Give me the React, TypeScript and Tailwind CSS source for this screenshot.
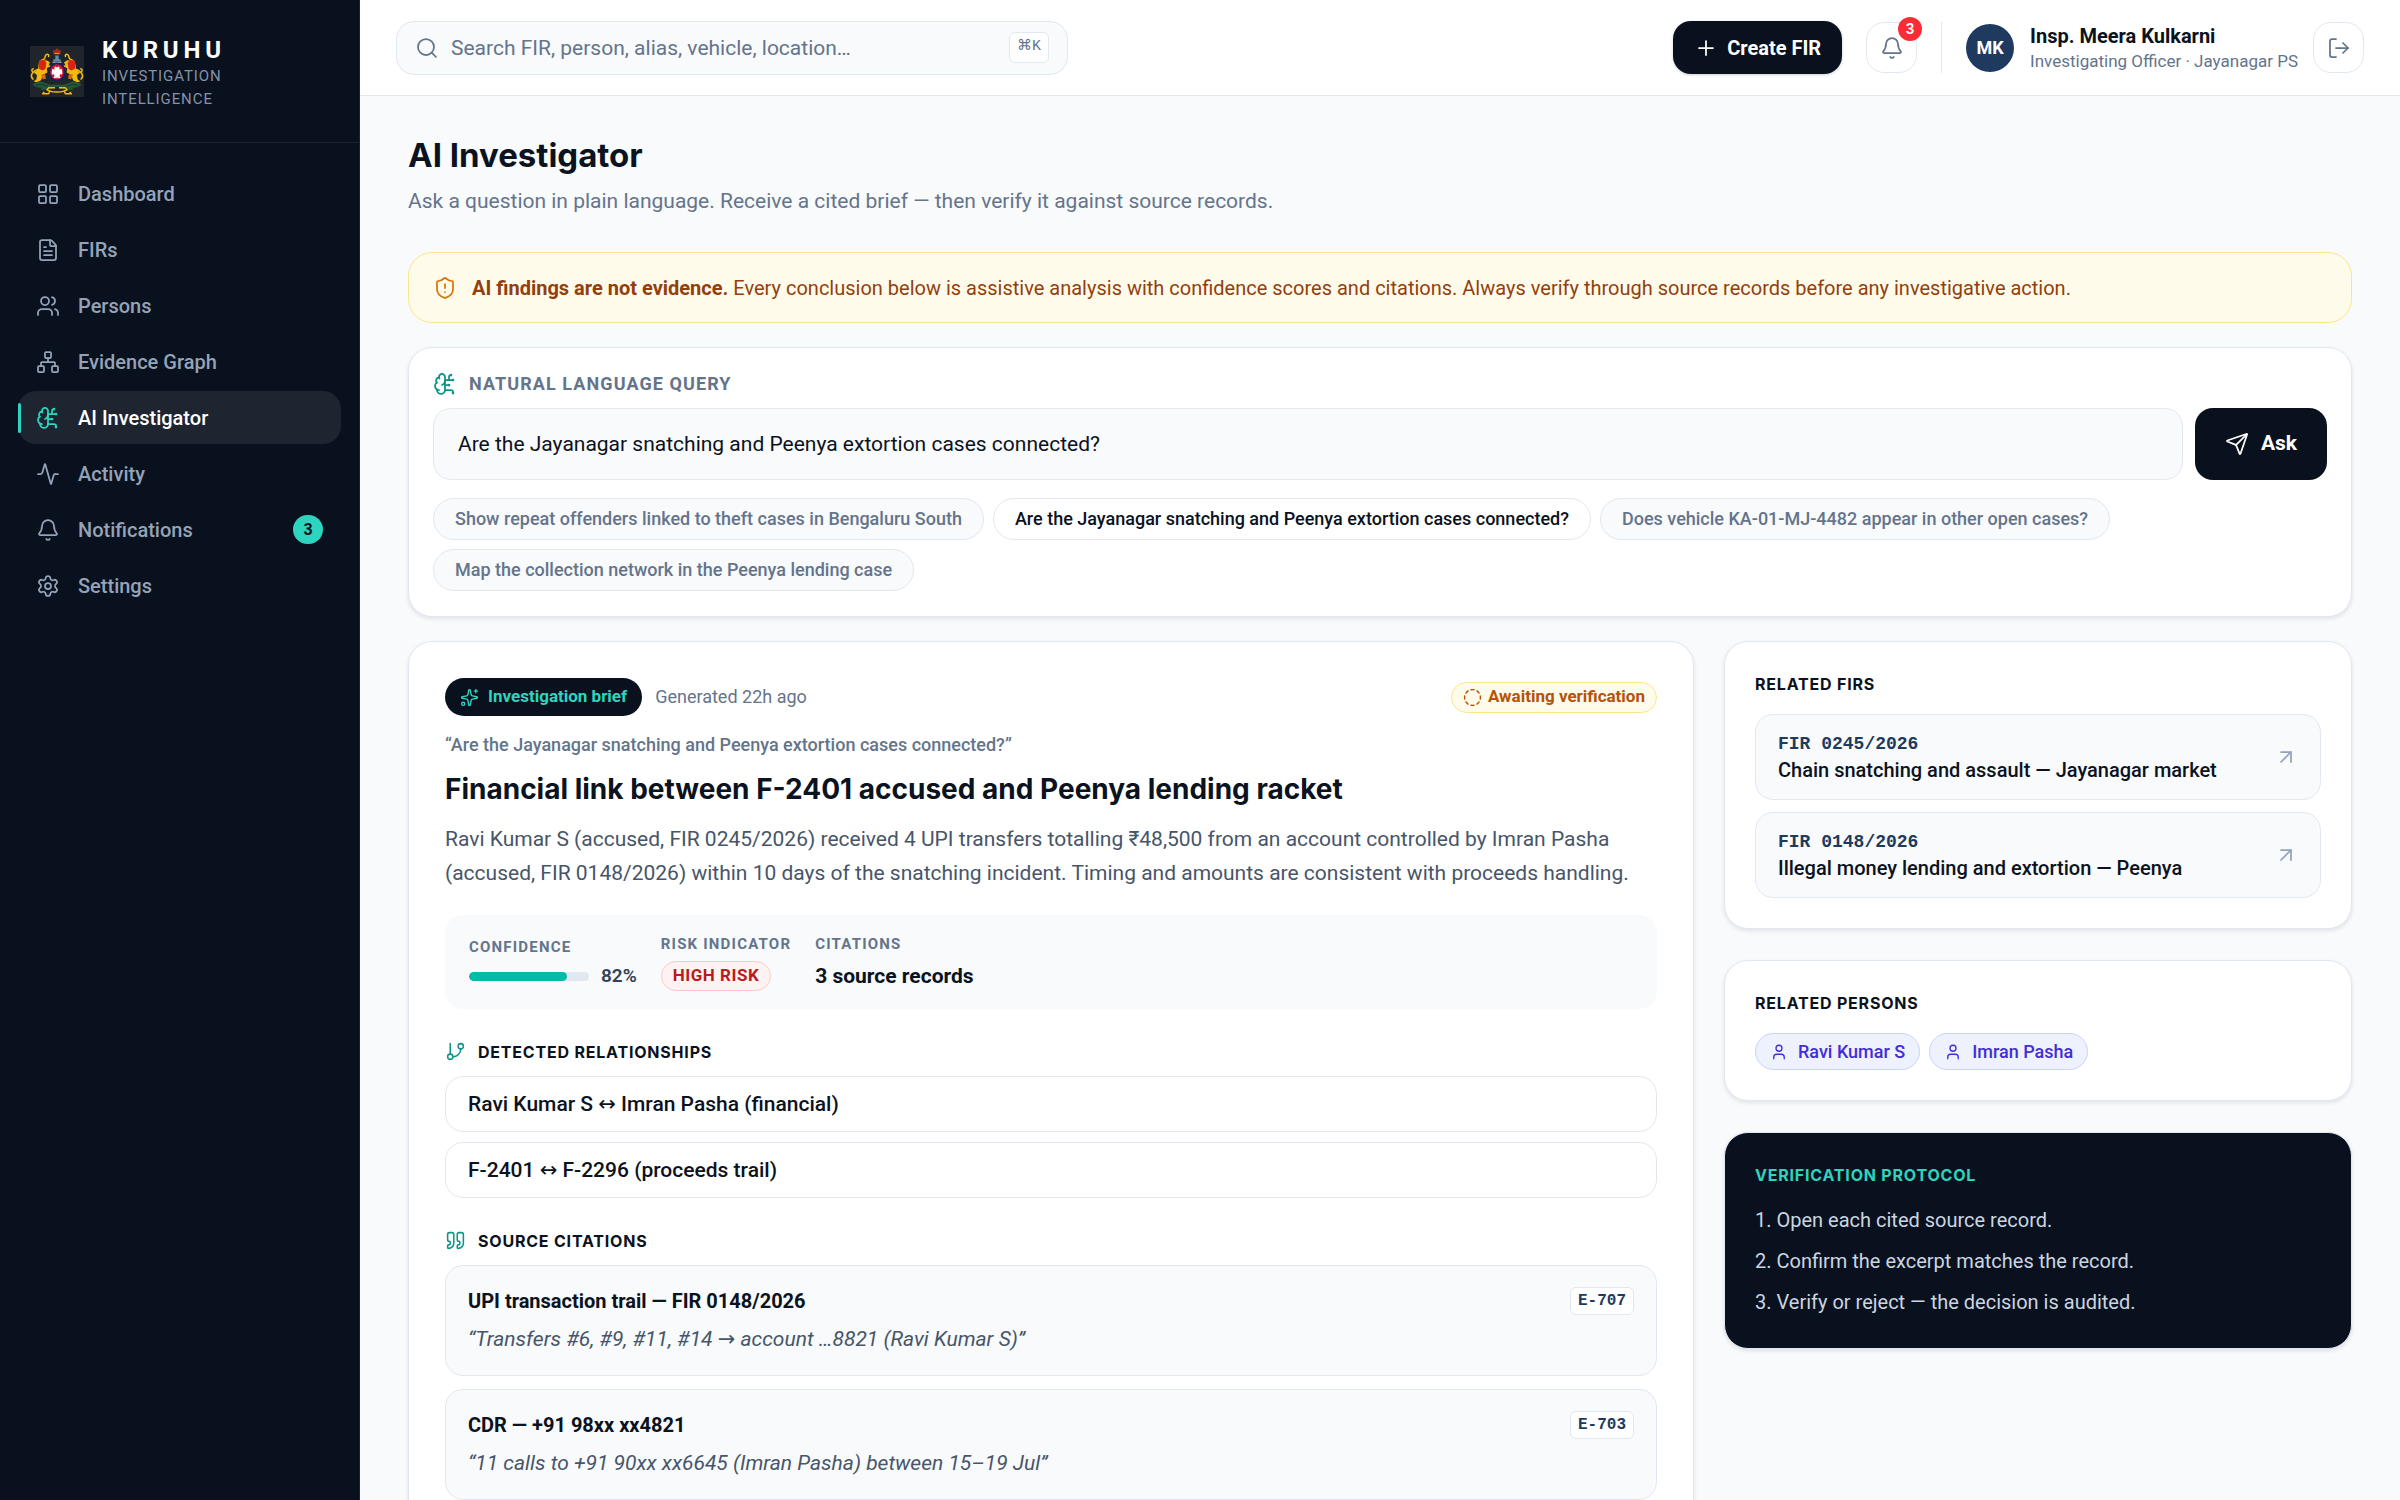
import React from 'react';
import {
  Activity,
  ArrowUpRight,
  Bell,
  BrainCircuit,
  CircleDashed,
  FileText,
  GitBranch,
  LayoutGrid,
  LogOut,
  Network,
  Plus,
  Quote,
  Search,
  Send,
  Settings,
  ShieldAlert,
  Sparkles,
  User,
  Users,
  type LucideIcon,
} from 'lucide-react';

type NavItem = { label: string; icon: LucideIcon; active?: boolean; count?: number };

const NAV: NavItem[] = [
  { label: 'Dashboard', icon: LayoutGrid },
  { label: 'FIRs', icon: FileText },
  { label: 'Persons', icon: Users },
  { label: 'Evidence Graph', icon: Network },
  { label: 'AI Investigator', icon: BrainCircuit, active: true },
  { label: 'Activity', icon: Activity },
  { label: 'Notifications', icon: Bell, count: 3 },
  { label: 'Settings', icon: Settings },
];

const QUESTION = 'Are the Jayanagar snatching and Peenya extortion cases connected?';

const SUGGESTIONS = [
  'Show repeat offenders linked to theft cases in Bengaluru South',
  QUESTION,
  'Does vehicle KA-01-MJ-4482 appear in other open cases?',
  'Map the collection network in the Peenya lending case',
];

const RELATIONSHIPS = ['Ravi Kumar S ↔ Imran Pasha (financial)', 'F-2401 ↔ F-2296 (proceeds trail)'];

const CITATIONS = [
  {
    title: 'UPI transaction trail — FIR 0148/2026',
    excerpt: '“Transfers #6, #9, #11, #14 → account …8821 (Ravi Kumar S)”',
    id: 'E-707',
  },
  {
    title: 'CDR — +91 98xx xx4821',
    excerpt: '“11 calls to +91 90xx xx6645 (Imran Pasha) between 15–19 Jul”',
    id: 'E-703',
  },
];

const FIRS = [
  { id: 'FIR 0245/2026', title: 'Chain snatching and assault — Jayanagar market' },
  { id: 'FIR 0148/2026', title: 'Illegal money lending and extortion — Peenya' },
];

const PERSONS = ['Ravi Kumar S', 'Imran Pasha'];

const PROTOCOL = [
  '1. Open each cited source record.',
  '2. Confirm the excerpt matches the record.',
  '3. Verify or reject — the decision is audited.',
];

const MONO = "font-['Liberation_Mono',monospace]";
const DISPLAY = "font-['Inter',sans-serif]";
const PANEL = 'rounded-3xl border border-[#e2e8f0] shadow-[0_2px_4px_rgba(15,23,42,0.1)]';
const HEADING = "font-['Inter',sans-serif] text-base leading-6 font-bold tracking-[0.05em] uppercase";

function EmblemSide() {
  return (
    <g>
      <path
        d="M18.5 10.5c.8-1.6-1-3-2.4-1.8-1.4 1.2-.6 3.3-2.2 4.6-2.6.6-4 2-4.4 4.6l-.6 5c-2.6.6-5 2-6.6 4.4-1.2 1.8-.9 4.2.6 5.8M3.2 22.8c-1.8.3-1.8 3.2.4 3.4"
        fill="none"
        stroke="#f2b90f"
        strokeWidth="1.5"
        strokeLinecap="round"
      />
      <path d="M9 15.5l5-1.7 4.5 1.2.5 4-2.2 3.4.6 4.2-4.6 2.2-1.8 5.4-3.8 2-3.6-.6 2.8-2.4.6-4.2-3-2.2 4.6-4z" fill="#f2b90f" />
      <path d="M9.2 14.6l5.4-.8 2 2.2-1.2 7-3 1.6-3.6-2z" fill="#d92316" />
      <path d="M11 28.8l4-.8 1 4.6-3.2.8z" fill="#d9690f" />
      <path d="M16 15.6l3.4 1.2M17 21l3-1" stroke="#f2b90f" strokeWidth="1.4" strokeLinecap="round" />
      <path d="M2.5 38.5c4-3.6 8-3.6 11.5-2 3.4 1.4 6 2.4 10 2.3v3.4c-5 .4-9 2.4-14 1.4 1-1 2-1.4 2.8-2.2-3.6.8-7-.1-10.3-2.9z" fill="#23563b" />
      <path d="M6 39.4c4-1.6 8-1 12 1.2" fill="none" stroke="#12301f" strokeWidth="0.8" />
      <path
        d="M25 41.8h-6.2l-1.8 2 2.8 1.4-1.2 2.6h-6l1.8-1.8"
        fill="none"
        stroke="#f2b90f"
        strokeWidth="1.5"
        strokeLinejoin="round"
      />
    </g>
  );
}

function Emblem() {
  return (
    <svg width="54" height="51" viewBox="0 0 54 51" role="img" aria-label="State emblem" className="shrink-0">
      <rect width="54" height="51" fill="#20252b" />
      <EmblemSide />
      <g transform="translate(54 0) scale(-1 1)">
        <EmblemSide />
      </g>
      <path d="M22.8 4l2 .6L27 2l2.2 2.6 2-.6-.9 4.6h-6.6z" fill="#a92a1d" />
      <path d="M24.5 7.4h5" stroke="#e0b040" strokeWidth="0.9" />
      <path d="M25.3 9.6h3.4v3.6h2v2h-7.4v-2h2z" fill="#5f8ea6" />
      <path d="M22.5 16.2h9" stroke="#c9d4da" strokeWidth="1" />
      <ellipse cx="27" cy="26" rx="8.6" ry="9.4" fill="#1d1c5c" />
      <ellipse cx="27" cy="25.8" rx="6.8" ry="7.6" fill="#d3142f" />
      <path
        d="M27 21.600l-1.800-1-1 1.600.8 1.400-2.800-.6-.6 4.600 1.400 1.400 1-1.400.4 2.800-1.200 1.600 2.200.2.600-1.200 1 1.800 1-1.800.6 1.200 2.200-.2-1.200-1.600.4-2.800 1 1.400 1.400-1.400-.6-4.600-2.800.6.800-1.400-1-1.600z"
        fill="#fff"
      />
      <path d="M23.5 38.5h7v2.5h-7z" fill="#23563b" />
      <path d="M19 44.8c5 1.5 11 1.5 16 0" fill="none" stroke="#f2b90f" strokeWidth="1.4" />
    </svg>
  );
}

function Sidebar() {
  return (
    <aside className="flex w-[360px] shrink-0 flex-col border-r border-[#1c2333] bg-[#0a111e]">
      <div className="flex h-[143px] items-center gap-[18px] border-b border-[#1c2432] px-[30px]">
        <Emblem />
        <div className="pt-1">
          <p className="text-2xl leading-[30px] font-bold tracking-[0.2em] text-white">KURUHU</p>
          <p className="w-[150px] text-[15px] leading-[23px] tracking-[0.06em] text-[#8492a9]">
            INVESTIGATION INTELLIGENCE
          </p>
        </div>
      </div>
      <nav className="flex flex-col gap-[3px] px-[18px] pt-6" aria-label="Main">
        {NAV.map(({ label, icon: Icon, active, count }) => (
          <a
            key={label}
            href="#"
            aria-current={active ? 'page' : undefined}
            className={
              active
                ? 'relative flex h-[53px] items-center gap-[18px] rounded-[18px] bg-[#1e2531] px-[18px] text-xl font-medium text-white'
                : 'relative flex h-[53px] items-center gap-[18px] rounded-[18px] px-[18px] text-xl font-medium text-[#94a3b8]'
            }
          >
            {active && <span className="absolute top-3 left-0 h-[30px] w-[3px] rounded-full bg-[#2dd4bf]" />}
            <Icon size={24} strokeWidth={1.75} className={active ? 'text-[#2dd4bf]' : ''} />
            <span className="flex-1">{label}</span>
            {count && (
              <span className="flex h-[29px] w-[30px] items-center justify-center rounded-full bg-[#2dd4bf] text-base font-bold text-[#0a111e]">
                {count}
              </span>
            )}
          </a>
        ))}
      </nav>
    </aside>
  );
}

function TopBar() {
  return (
    <header className="flex h-24 shrink-0 items-center border-b border-[#e2e8f0] bg-white px-9">
      <label className="flex h-[54px] w-full max-w-[672px] items-center gap-3 rounded-[18px] border border-[#e2e8f0] bg-[#f8fafc] px-[18px] text-[#64748b]">
        <Search size={24} strokeWidth={1.75} className="shrink-0" />
        <input
          type="search"
          aria-label="Search"
          placeholder="Search FIR, person, alias, vehicle, location…"
          className="min-w-0 flex-1 bg-transparent pt-0.5 text-[21px] outline-none placeholder:text-[#64748b]"
        />
        <kbd className="flex h-[31px] items-center rounded-md border border-[#e2e8f0] bg-white px-[7px] font-['Liberation_Mono','DejaVu_Sans',monospace] text-[15px]">
          ⌘K
        </kbd>
      </label>
      <div className="ml-auto flex shrink-0 items-center">
        <button
          type="button"
          className="flex h-[53px] items-center gap-[9px] rounded-[18px] bg-[#0a111e] px-[21px] text-xl font-bold text-white shadow-[0_1px_3px_rgba(15,23,42,0.2)]"
        >
          <Plus size={24} strokeWidth={1.75} />
          Create FIR
        </button>
        <button
          type="button"
          aria-label="Notifications, 3 unread"
          className="relative ml-6 flex size-[51px] items-center justify-center rounded-[18px] border border-[#e2e8f0] text-[#64748b]"
        >
          <Bell size={24} strokeWidth={1.75} />
          <span className="absolute -top-1.5 -right-1.5 flex size-6 items-center justify-center rounded-full bg-[#fb2c36] text-[15px] font-bold text-white">
            3
          </span>
        </button>
        <div className="ml-6 flex h-[51px] items-center border-l border-[#e2e8f0] pl-6">
          <span className="flex size-12 items-center justify-center rounded-full bg-[#1e3a5f] text-lg font-bold text-white">
            MK
          </span>
          <div className="mr-[15px] ml-4 whitespace-nowrap">
            <p className="text-xl leading-[26px] font-bold text-[#0b1220]">Insp. Meera Kulkarni</p>
            <p className="text-[17px] leading-6 text-[#64748b]">Investigating Officer · Jayanagar PS</p>
          </div>
          <button
            type="button"
            aria-label="Sign out"
            className="flex size-[51px] items-center justify-center rounded-[18px] border border-[#e2e8f0] text-[#64748b]"
          >
            <LogOut size={24} strokeWidth={1.75} />
          </button>
        </div>
      </div>
    </header>
  );
}

function QueryCard() {
  return (
    <section className={`${PANEL} mt-6 bg-white p-6 pb-[25px]`}>
      <label
        htmlFor="query"
        className="flex h-6 items-center gap-3 text-lg font-bold tracking-[0.06em] text-[#64748b] uppercase"
      >
        <BrainCircuit size={24} strokeWidth={1.75} className="text-[#0d9488]" />
        Natural language query
      </label>
      <div className="mt-3 flex gap-3">
        <input
          id="query"
          defaultValue={QUESTION}
          className="h-[72px] min-w-0 flex-1 rounded-[18px] border border-[#e2e8f0] bg-[#f8fafc] px-6 text-[21px] text-[#0b1220] outline-none"
        />
        <button
          type="button"
          className="flex items-center gap-3 rounded-[18px] bg-[#0a111e] px-[30px] text-[21px] font-bold text-white"
        >
          <Send size={24} strokeWidth={1.75} />
          Ask
        </button>
      </div>
      <div className="mt-[18px] flex flex-wrap gap-[9px]">
        {SUGGESTIONS.map((text) => (
          <button
            key={text}
            type="button"
            className={
              text === QUESTION
                ? 'h-[42px] rounded-full border border-[#e2e8f0] bg-white px-[21px] text-lg font-medium text-[#0b1220]'
                : 'h-[42px] rounded-full border border-[#e2e8f0] bg-[#f8fafc] px-[21px] text-lg font-medium text-[#64748b]'
            }
          >
            {text}
          </button>
        ))}
      </div>
    </section>
  );
}

function StatLabel({ children }: { children: string }) {
  return <p className="text-[15px] leading-[22px] font-bold tracking-[0.08em] text-[#64748b] uppercase">{children}</p>;
}

function BriefCard() {
  const confidence = 82;
  return (
    <article className={`${PANEL} col-span-2 bg-white p-9`}>
      <div className="flex h-[38px] items-center gap-[13px]">
        <span className="flex h-full items-center gap-[9px] rounded-full bg-[#0a111e] px-[15px] text-[17px] font-bold text-[#2dd4bf]">
          <Sparkles size={19} strokeWidth={1.75} />
          Investigation brief
        </span>
        <span className="text-lg text-[#64748b]">Generated 22h ago</span>
        <span className="ml-auto flex h-[31px] items-center gap-1.5 rounded-full border border-[#fde68a] bg-[#fffbeb] px-[11px] text-[17px] font-bold text-[#b45309]">
          <CircleDashed size={19} strokeWidth={1.75} />
          Awaiting verification
        </span>
      </div>
      <p className="mt-4 text-lg leading-[26px] font-medium text-[#64748b]">“{QUESTION}”</p>
      <h2 className={`${DISPLAY} mt-3 text-[28px] leading-[38px] font-bold text-[#0b1220]`}>
        Financial link between F-2401 accused and Peenya lending racket
      </h2>
      <p className="mt-3.5 text-[21px] leading-[34px] text-[#475569]">
        Ravi Kumar S (accused, FIR 0245/2026) received 4 UPI transfers totalling ₹48,500 from an account controlled by
        Imran Pasha (accused, FIR 0148/2026) within 10 days of the snatching incident. Timing and amounts are consistent
        with proceeds handling.
      </p>
      <div className="mt-[25px] flex items-center gap-6 rounded-[18px] bg-[#f8fafc] px-6 py-[18px]">
        <div>
          <StatLabel>Confidence</StatLabel>
          <div className="mt-1.5 flex items-center gap-3">
            <div className="h-[9px] w-[120px] overflow-hidden rounded-full bg-[#e2e8f0]">
              <div className="h-full rounded-full bg-[#00bba7]" style={{ width: `${confidence}%` }} />
            </div>
            <span className="text-[19px] leading-6 font-semibold text-[#334155]">{confidence}%</span>
          </div>
        </div>
        <div>
          <StatLabel>Risk indicator</StatLabel>
          <span className="mt-1.5 flex h-[30px] w-fit items-center rounded-full border border-[#fecaca] bg-[#fef2f2] px-[11px] text-[17px] font-bold tracking-[0.03em] text-[#b91c1c]">
            HIGH RISK
          </span>
        </div>
        <div>
          <StatLabel>Citations</StatLabel>
          <p className="mt-1.5 text-[21px] leading-[30px] font-bold text-[#0b1220]">3 source records</p>
        </div>
      </div>

      <h3 className={`${HEADING} mt-[30px] flex h-[25px] items-center gap-3 text-[#0b1220]`}>
        <GitBranch size={21} strokeWidth={1.75} className="text-[#0d9488]" />
        Detected relationships
      </h3>
      <ul className="mt-3 flex flex-col gap-2.5">
        {RELATIONSHIPS.map((text) => (
          <li
            key={text}
            className="flex h-14 items-center rounded-[18px] border border-[#e2e8f0] px-[22px] pt-0.5 text-[21px] font-medium text-[#0b1220]"
          >
            {text}
          </li>
        ))}
      </ul>

      <h3 className={`${HEADING} mt-[30px] flex h-[25px] items-center gap-3 text-[#0b1220]`}>
        <Quote size={21} strokeWidth={1.75} className="text-[#0d9488]" />
        Source citations
      </h3>
      <ul className="mt-3 flex flex-col gap-[13px]">
        {CITATIONS.map(({ title, excerpt, id }) => (
          <li key={id} className="rounded-[18px] border border-[#e2e8f0] bg-[#f8fafc] px-[22px] py-[21px]">
            <div className="flex h-7 items-center justify-between">
              <p className="text-xl font-bold text-[#0b1220]">{title}</p>
              <span
                className={`${MONO} flex h-full items-center rounded-md border border-[#e2e8f0] bg-white px-[7px] text-base font-bold text-[#1e3a5f]`}
              >
                {id}
              </span>
            </div>
            <p className="mt-[9px] text-[21px] leading-[30px] text-[#475569] italic">{excerpt}</p>
          </li>
        ))}
      </ul>
    </article>
  );
}

function RelatedColumn() {
  return (
    <div className="flex flex-col gap-[31px]">
      <section className={`${PANEL} bg-white p-[30px]`}>
        <h3 className={`${HEADING} text-[#0b1220]`}>Related FIRs</h3>
        <div className="mt-[18px] flex flex-col gap-3">
          {FIRS.map(({ id, title }) => (
            <a
              key={id}
              href="#"
              className="flex h-[86px] items-center justify-between rounded-[18px] border border-[#e2e8f0] bg-[#f8fafc] px-[22px]"
            >
              <span className="flex flex-col">
                <span className={`${MONO} text-lg leading-[26px] font-bold text-[#1e3a5f]`}>{id}</span>
                <span className="text-xl leading-[27px] font-medium text-[#0b1220]">{title}</span>
              </span>
              <ArrowUpRight size={24} strokeWidth={1.75} className="text-[#94a3b8]" />
            </a>
          ))}
        </div>
      </section>

      <section className={`${PANEL} bg-white p-[30px]`}>
        <h3 className={`${HEADING} text-[#0b1220]`}>Related persons</h3>
        <div className="mt-[18px] flex gap-[9px]">
          {PERSONS.map((name) => (
            <a
              key={name}
              href="#"
              className="flex h-[37px] items-center gap-2.5 rounded-full border border-[#c7d2fe] bg-[#eef2ff] px-3.5 text-lg font-medium text-[#432dd7]"
            >
              <User size={18} strokeWidth={1.75} />
              {name}
            </a>
          ))}
        </div>
      </section>

      <section className={`${PANEL} bg-[#0a111e] p-[30px]`}>
        <h3 className={`${HEADING} text-[#2dd4bf]`}>Verification protocol</h3>
        <ol className="mt-[18px] flex flex-col gap-2.5 text-xl leading-[31px] text-[#cbd5e1]">
          {PROTOCOL.map((step) => (
            <li key={step}>{step}</li>
          ))}
        </ol>
      </section>
    </div>
  );
}

export default function App() {
  return (
    <div className="flex h-screen overflow-hidden bg-[#f9fafc] font-['Roboto','DejaVu_Sans',sans-serif]">
      <Sidebar />
      <div className="flex min-w-0 flex-1 flex-col">
        <TopBar />
        <main className="flex-1 overflow-y-auto px-12 py-9 [scrollbar-width:none]">
          <h1 className={`${DISPLAY} text-[33px] leading-[46px] font-bold text-[#0b1220]`}>AI Investigator</h1>
          <p className="mt-2 text-[21px] leading-[30px] text-[#64748b]">
            Ask a question in plain language. Receive a cited brief — then verify it against source records.
          </p>
          <div className="mt-9 flex min-h-[71px] items-center gap-[15px] rounded-3xl border border-[#fde68a] bg-[#fffbeb] px-6 text-xl text-[#923f0e]">
            <ShieldAlert size={24} strokeWidth={1.75} className="shrink-0 text-[#d97706]" />
            <p>
              <strong className="font-bold">AI findings are not evidence.</strong> Every conclusion below is assistive
              analysis with confidence scores and citations. Always verify through source records before any
              investigative action.
            </p>
          </div>
          <QueryCard />
          <div className="mt-6 grid grid-cols-3 items-start gap-[30px]">
            <BriefCard />
            <RelatedColumn />
          </div>
        </main>
      </div>
    </div>
  );
}
